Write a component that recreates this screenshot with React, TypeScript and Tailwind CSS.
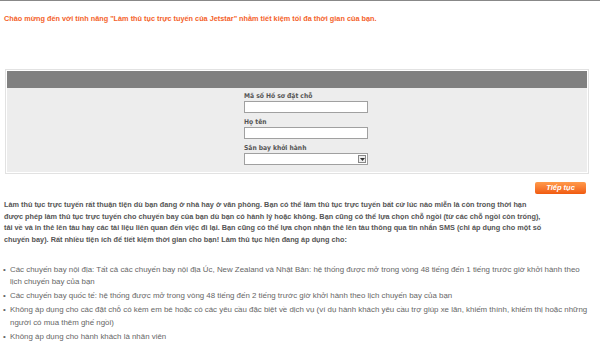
import React from "react";

const Field = ({ label, select }: { label: string; select?: boolean }) => (
  <div className="flex flex-col">
    <div className="h-[10px] text-[6.7px] leading-[10px] font-bold text-[#555]" style={{ fontFamily: '"DejaVu Sans Condensed", "DejaVu Sans", sans-serif' }}>
      {label}
    </div>
    <div className="h-[12px] w-[124px] border border-[#a0a0a0] bg-white flex justify-end items-center">
      {select && (
        <div className="mr-[1px] flex h-[8px] w-[8px] items-center justify-center border border-[#888] bg-[#eee]">
          <svg width="5" height="3" viewBox="0 0 5 3"><path d="M0 0h5L2.5 3z" fill="#333" /></svg>
        </div>
      )}
    </div>
  </div>
);

export default function App() {
  const para = [
    "Làm thủ tục trực tuyến rất thuận tiện dù bạn đang ở nhà hay ở văn phòng. Bạn có thể làm thủ tục trực tuyến bất cứ lúc nào miễn là còn trong thời hạn",
    "được phép làm thủ tục trực tuyến cho chuyến bay của bạn dù bạn có hành lý hoặc không. Bạn cũng có thể lựa chọn chỗ ngồi (từ các chỗ ngồi còn trống),",
    "tải về và in thẻ lên tàu hay các tài liệu liên quan đến việc đi lại. Bạn cũng có thể lựa chọn nhận thẻ lên tàu thông qua tin nhắn SMS (chỉ áp dụng cho một số",
    "chuyến bay). Rất nhiều tiện ích để tiết kiệm thời gian cho bạn! Làm thủ tục hiện đang áp dụng cho:",
  ];
  const items: string[][] = [
    [
      "Các chuyến bay nội địa: Tất cả các chuyến bay nội địa Úc, New Zealand và Nhật Bản: hệ thống được mở trong vòng 48 tiếng đến 1 tiếng trước giờ khởi hành theo",
      "lịch chuyến bay của bạn",
    ],
    ["Các chuyến bay quốc tế: hệ thống được mở trong vòng 48 tiếng đến 2 tiếng trước giờ khởi hành theo lịch chuyến bay của bạn"],
    [
      "Không áp dụng cho các đặt chỗ có kèm em bé hoặc có các yêu cầu đặc biệt về dịch vụ (ví dụ hành khách yêu cầu trợ giúp xe lăn, khiếm thính, khiếm thị hoặc những",
      "người có mua thêm ghế ngồi)",
    ],
    ["Không áp dụng cho hành khách là nhân viên"],
  ];
  return (
    <div className="h-[344px] w-[600px] overflow-hidden bg-white" style={{ fontFamily: '"Liberation Sans", Arial, sans-serif' }}>
      <div className="h-[1px] bg-[#888]" />
      <div className="pl-[4px] pt-[13px] text-[7.3px] font-bold leading-[10px] text-[#f4622a] whitespace-nowrap">
        Chào mừng đến với tính năng "Làm thủ tục trực tuyến của Jetstar" nhằm tiết kiệm tối đa thời gian của bạn.
      </div>
      <div className="ml-[5px] mt-[45px] w-[584px] border border-[#e2e2e2] bg-white p-[1px]">
        <div className="h-[17px] bg-[#808080]" />
        <div className="flex h-[84px] flex-col gap-[4px] bg-[#ededed] pl-[237px] pt-[3px]">
          <Field label="Mã số Hồ sơ đặt chỗ" />
          <Field label="Họ tên" />
          <Field label="Sân bay khởi hành" select />
        </div>
      </div>
      <div className="flex justify-end pr-[14px] pt-[8px]">
        <div className="flex h-[12px] w-[51px] items-center justify-center rounded-[2px] bg-gradient-to-b from-[#ff9a4a] to-[#f05a0c] text-[7.5px] font-bold italic text-white">
          Tiếp tục
        </div>
      </div>
      <div className="mt-[5px] pl-[4px] text-[7.3px] font-bold leading-[11.7px] text-[#555] whitespace-nowrap">
        {para.map((l, i) => (
          <div key={i}>{l}</div>
        ))}
      </div>
      <div className="mt-[18px] flex flex-col gap-[1.5px] text-[7.9px] leading-[12.5px] text-[#666]">
        {items.map((lines, i) => (
          <div key={i} className="flex">
            <div className="w-[10px] pl-[3px]">•</div>
            <div className="whitespace-nowrap">
              {lines.map((l, j) => (
                <div key={j}>{l}</div>
              ))}
            </div>
          </div>
        ))}
      </div>
    </div>
  );
}
